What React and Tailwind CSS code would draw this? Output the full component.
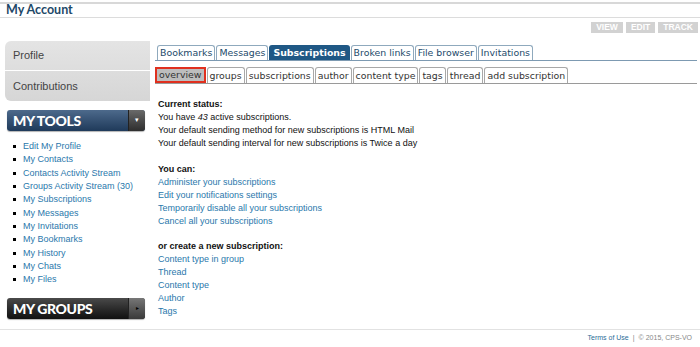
import React from 'react';

const tools = [
  'Edit My Profile',
  'My Contacts',
  'Contacts Activity Stream',
  'Groups Activity Stream (30)',
  'My Subscriptions',
  'My Messages',
  'My Invitations',
  'My Bookmarks',
  'My History',
  'My Chats',
  'My Files',
];

const mainTabs = ['Bookmarks', 'Messages', 'Subscriptions', 'Broken links', 'File browser', 'Invitations'];
const subTabs = ['overview', 'groups', 'subscriptions', 'author', 'content type', 'tags', 'thread', 'add subscription'];

const youCan = [
  'Administer your subscriptions',
  'Edit your notifications settings',
  'Temporarily disable all your subscriptions',
  'Cancel all your subscriptions',
];

const createNew = ['Content type in group', 'Thread', 'Content type', 'Author', 'Tags'];

export default function App() {
  return (
    <div className="w-[700px] h-[347px] bg-white overflow-hidden relative" style={{ fontFamily: '"Liberation Sans", Arial, sans-serif' }}>
      <div className="h-[2px] mt-[2px] bg-[#d8d8d8]" />
      <div className="h-[14px] px-[6px] flex items-center border-b border-[#dcdcdc]">
        <span className="text-[12.5px] font-bold text-[#1d4868] leading-none" style={{ fontFamily: 'Lato, sans-serif' }}>My Account</span>
      </div>

      <div className="flex justify-end gap-[3px] pr-[2px] mt-[4px] h-[11px]">
        {['VIEW', 'EDIT', 'TRACK'].map((b) => (
          <span key={b} className="bg-[#d2d2d2] text-white text-[8.5px] font-bold px-[5px] flex items-center leading-none">{b}</span>
        ))}
      </div>

      <div className="flex mt-[8px]">
        {/* sidebar */}
        <div className="w-[150px] pl-[5px] shrink-0">
          <div className="rounded-l-[6px] bg-gradient-to-b from-[#e4e4e4] to-[#d6d6d6] overflow-hidden">
            <div className="h-[30px] flex items-center pl-[8px] text-[11px] text-[#444] border-b border-white">Profile</div>
            <div className="h-[30px] flex items-center pl-[8px] text-[11px] text-[#444]">Contributions</div>
          </div>

          <div className="mt-[9px] ml-[2px] w-[138px] h-[21px] rounded-[3px] flex overflow-hidden bg-gradient-to-b from-[#4d6a8c] to-[#1f3a5a] shadow-[0_1px_1px_rgba(0,0,0,0.3)]">
            <span className="flex-1 flex items-center pl-[6px] text-white text-[14px] tracking-tight" style={{ fontFamily: 'Lato, sans-serif', fontWeight: 900 }}>MY TOOLS</span>
            <span className="w-[17px] flex items-center justify-center bg-gradient-to-b from-[#6a6a6a] to-[#2e2e2e] border-l border-[#222] text-white text-[7px]">▾</span>
          </div>

          <ul className="mt-[9px] pl-[8px]">
            {tools.map((t) => (
              <li key={t} className="h-[13.3px] flex items-center text-[9px] text-[#2a78ac] leading-none">
                <span className="w-[3px] h-[3px] bg-black mr-[7px] shrink-0" />
                {t}
              </li>
            ))}
          </ul>

          <div className="mt-[12px] ml-[2px] w-[138px] h-[21px] rounded-[3px] flex overflow-hidden bg-gradient-to-b from-[#4a4a4a] to-[#111] shadow-[0_1px_1px_rgba(0,0,0,0.3)]">
            <span className="flex-1 flex items-center pl-[6px] text-white text-[14px] tracking-tight" style={{ fontFamily: 'Lato, sans-serif', fontWeight: 900 }}>MY GROUPS</span>
            <span className="w-[17px] flex items-center justify-center bg-gradient-to-b from-[#777] to-[#3a3a3a] border-l border-[#222] text-black text-[6px]">▸</span>
          </div>
        </div>

        {/* main */}
        <div className="flex-1 pl-[5px] pr-[3px]" style={{ fontFamily: '"DejaVu Sans", Verdana, sans-serif' }}>
          <div className="flex items-end gap-[1px] pl-[2px] border-b border-[#7d9ab2] h-[16px] mt-[4px]">
            {mainTabs.map((t) => (
              <span
                key={t}
                className={
                  t === 'Subscriptions'
                    ? 'h-[15px] px-[4px] flex items-center rounded-t-[3px] bg-[#1f5885] text-white text-[9.4px] font-bold leading-none'
                    : 'h-[15px] px-[2px] flex items-center rounded-t-[3px] border border-b-0 border-[#8fa9bd] bg-white text-[#1d4a6a] text-[9.4px] leading-none'
                }
              >
                {t}
              </span>
            ))}
          </div>

          <div className="flex items-end gap-[1px] border-b border-[#9a9a9a] h-[17px] mt-[6px]">
            {subTabs.map((t) => (
              <span
                key={t}
                className={
                  t === 'overview'
                    ? 'h-[16px] px-[2px] flex items-center border-2 border-[#e0301e] bg-[#bdbdbd] text-[#333] text-[9.4px] leading-none'
                    : 'h-[16px] px-[2px] flex items-center rounded-t-[3px] border border-b-0 border-[#a8a8a8] bg-white text-[#333] text-[9.4px] leading-none'
                }
              >
                {t}
              </span>
            ))}
          </div>

          <div className="pl-[3px] mt-[14px] text-[9px] leading-[13px] text-[#111]" style={{ fontFamily: '"Liberation Sans", Arial, sans-serif' }}>
            <p className="font-bold">Current status:</p>
            <p>You have <em>43</em> active subscriptions.</p>
            <p>Your default sending method for new subscriptions is HTML Mail</p>
            <p>Your default sending interval for new subscriptions is Twice a day</p>

            <p className="font-bold mt-[13px]">You can:</p>
            {youCan.map((l) => (
              <p key={l} className="text-[#2a78ac]">{l}</p>
            ))}

            <p className="font-bold mt-[12px]">or create a new subscription:</p>
            {createNew.map((l) => (
              <p key={l} className="text-[#2a78ac]">{l}</p>
            ))}
          </div>
        </div>
      </div>

      <div className="absolute left-0 right-0 top-[329px] border-t border-[#e2e2e2]">
        <div className="flex justify-end pr-[8px] pt-[3px] text-[7px] text-[#888]">
          <span className="text-[#2a6c98]">Terms of Use</span>
          <span className="mx-[4px]">|</span>
          <span>© 2015, CPS-VO</span>
        </div>
      </div>
    </div>
  );
}
